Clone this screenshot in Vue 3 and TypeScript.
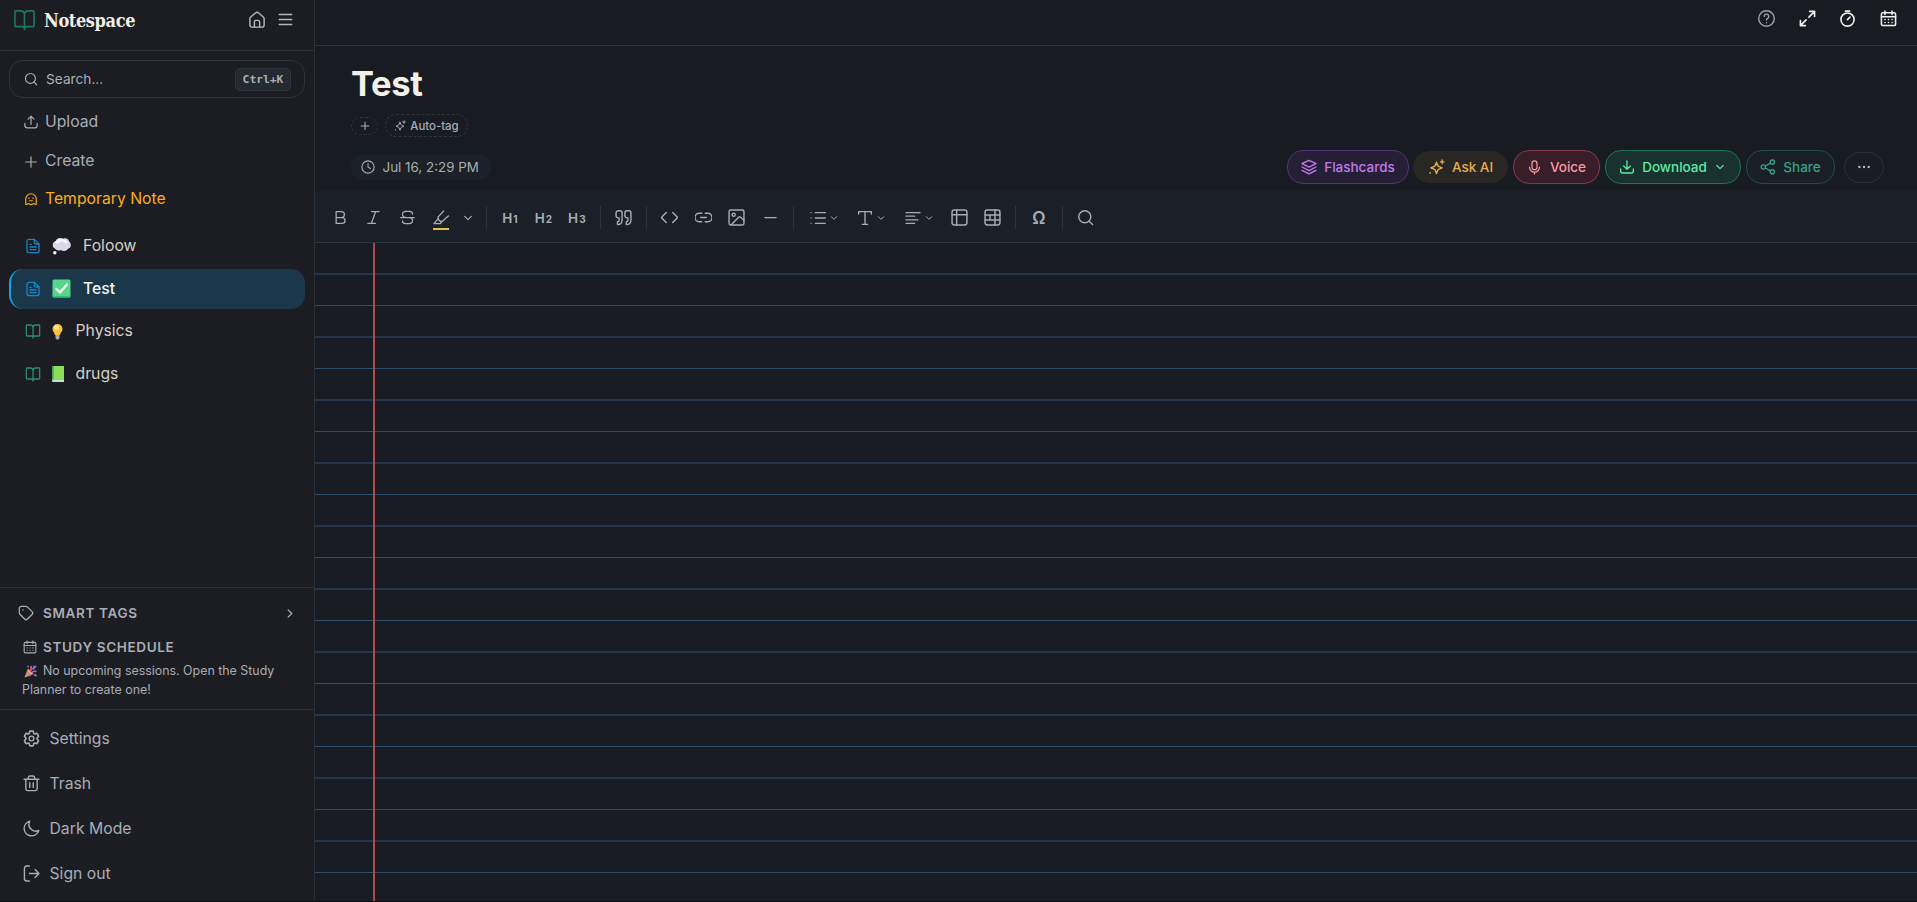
<script setup lang="ts">
import { h } from 'vue'
import type { FunctionalComponent } from 'vue'

const paths: Record<string, string> = {
  book: '<path d="M12 6.500V22.500M3 19.500a1 1 0 0 1-1-1V4a1 1 0 0 1 1-1h5a4 4 0 0 1 4 3.500a4 4 0 0 1 4-3.500h5a1 1 0 0 1 1 1v14.500a1 1 0 0 1-1 1h-6.500a2.500 2.500 0 0 0-2.500 2.500a2.500 2.500 0 0 0-2.500-2.500z"/>',
  home: '<path d="M2.500 10.300a3 3 0 0 1 1.100-2.300l6.300-5.300a3.200 3.200 0 0 1 4.200 0l6.300 5.300a3 3 0 0 1 1.100 2.300v8.200a3 3 0 0 1-3 3h-13a3 3 0 0 1-3-3z"/><path d="M8.500 21.500v-7a2 2 0 0 1 2-2h3a2 2 0 0 1 2 2v7"/>',
  menu: '<path d="M2 4h20M2 12h20M2 20h20"/>',
  search: '<circle cx="11" cy="11" r="8.500"/><path d="m17.200 17.200 4.800 4.800"/>',
  upload: '<path d="M12 16V2.500M7 7l5-5 5 5M1.500 14.500V18a4 4 0 0 0 4 4h13a4 4 0 0 0 4-4v-3.500"/>',
  download: '<path d="M12 3v12M7 10.500l5 5 5-5M2.500 15v3a3 3 0 0 0 3 3h13a3 3 0 0 0 3-3v-3"/>',
  plus: '<path d="M12 3v18M3 12h18"/>',
  ghost: '<path d="M3 21V12a9 9 0 0 1 18 0v9M3 21c2 1 3-1 4.500-1s2 1.500 4.500 1.500 3-1.500 4.500-1.500 3 2 4.500 1"/><path d="M8.500 10v1M15.500 10v1M9.500 15h5"/>',
  doc: '<path d="M14 2H6a3 3 0 0 0-3 3v14a3 3 0 0 0 3 3h12a3 3 0 0 0 3-3V9z"/><path d="M14 2v4a3 3 0 0 0 3 3h4M7.500 9.500h2M7.500 13.500h9M7.500 17.500h9"/>',
  tag: '<path d="M2 5a3 3 0 0 1 3-3h6.500a4 4 0 0 1 2.800 1.200l6.800 6.800a3 3 0 0 1 0 4.200l-6.900 6.900a3 3 0 0 1-4.200 0L3.200 14.300A4 4 0 0 1 2 11.500z"/><path d="M7.500 7.300v.4"/>',
  calendar: '<rect x="2" y="4" width="20" height="18" rx="2"/><path d="M7 1.500v5M17 1.500v5M2 9.500h20"/><path d="M7 13.500h.1M12 13.500h.1M17 13.500h.1M7 17.700h.1M12 17.700h.1M17 17.700h.1"/>',
  right: '<path d="m9 4 8 8-8 8"/>',
  down: '<path d="m4 8 8 8 8-8"/>',
  gear: '<path d="M9.594 3.940c.09-.542.56-.94 1.110-.94h2.593c.55 0 1.020.398 1.110.94l.213 1.281c.063.374.313.686.645.87.074.04.147.083.22.127.325.196.72.257 1.075.124l1.217-.456a1.125 1.125 0 0 1 1.370.49l1.296 2.247a1.125 1.125 0 0 1-.26 1.431l-1.003.827c-.293.241-.438.613-.43.992a7.723 7.723 0 0 1 0 .255c-.008.378.137.75.43.991l1.004.827c.424.35.534.955.26 1.430l-1.298 2.247a1.125 1.125 0 0 1-1.369.491l-1.217-.456c-.355-.133-.75-.072-1.076.124a6.470 6.470 0 0 1-.22.128c-.331.183-.581.495-.644.869l-.213 1.281c-.09.543-.56.94-1.110.94h-2.594c-.55 0-1.019-.398-1.110-.94l-.213-1.281c-.062-.374-.312-.686-.644-.87a6.520 6.520 0 0 1-.22-.127c-.325-.196-.72-.257-1.076-.124l-1.217.456a1.125 1.125 0 0 1-1.369-.49l-1.297-2.247a1.125 1.125 0 0 1 .26-1.431l1.004-.827c.292-.24.437-.613.43-.991a6.932 6.932 0 0 1 0-.255c.007-.38-.138-.751-.43-.992l-1.004-.827a1.125 1.125 0 0 1-.26-1.430l1.297-2.247a1.125 1.125 0 0 1 1.370-.491l1.216.456c.356.133.751.072 1.076-.124.072-.044.146-.086.22-.128.332-.183.582-.495.644-.869z" transform="matrix(1.150 0 0 1.150 -1.800 -1.800)"/><circle cx="12" cy="12" r="3.300"/>',
  trash: '<path d="M1.500 6h21M4 6v13.500a2.500 2.500 0 0 0 2.500 2.500h11a2.500 2.500 0 0 0 2.500-2.500V6M7.500 6V4a2.500 2.500 0 0 1 2.500-2.500h4A2.500 2.500 0 0 1 16.500 4v2M9.500 11v6.500M14.500 11v6.500"/>',
  moon: '<path d="M22.300 14.500A10.500 10.500 0 1 1 9.500 1.700a9.500 9.500 0 0 0 12.800 12.800z"/>',
  exit: '<path d="M9 1.500H5a3 3 0 0 0-3 3v15a3 3 0 0 0 3 3h4M9 12h13.500M17 6.500l5.500 5.500-5.500 5.500"/>',
  help: '<circle cx="12" cy="12" r="11"/><path d="M8.800 9a3.200 3.200 0 1 1 5 2.700c-1.200.8-1.800 1.300-1.800 2.300M12 17.800v.2"/>',
  expand: '<path d="M15 2h7v7M22 2l-8 8M9 22H2v-7M2 22l8-8"/>',
  timer: '<circle cx="12" cy="13.500" r="9.300"/><path d="M9 1.500h6M12 13.500l3.500-3.500"/>',
  sparkle: '<path d="M10.500 5.500 12.300 10a3 3 0 0 0 1.700 1.700l4.500 1.800-4.500 1.800a3 3 0 0 0-1.700 1.700l-1.800 4.500L8.700 17A3 3 0 0 0 7 15.300l-4.500-1.800L7 11.700A3 3 0 0 0 8.700 10z" transform="translate(1.500 -1)"/><path d="M20 1.500v5M17.500 4h5M3 19.500v.5"/>',
  clock: '<circle cx="12" cy="12" r="10.500"/><path d="M12 6v6l4 2.500"/>',
  layers: '<path d="M12 2 22.500 7 12 12.300 1.500 7zM1.500 12 12 17.300 22.500 12M1.500 17 12 22.300 22.500 17"/>',
  mic: '<rect x="8" y="1.500" width="8" height="14" rx="4"/><path d="M4 11.500a8 8 0 0 0 16 0M12 19.500v3"/>',
  share: '<circle cx="18.500" cy="4.700" r="3.200"/><circle cx="5" cy="12" r="3.200"/><circle cx="18.500" cy="19.300" r="3.200"/><path d="m8 10.500 7.500-4.200M8 13.500l7.500 4.200"/>',
  dots: '<path d="M4 12h.1M12 12h.1M20 12h.1" stroke-width="4"/>',
  bold: '<path d="M5 12V2.500h8.500a4.700 4.700 0 0 1 0 9.500H5v9.500h9.500a4.700 4.700 0 0 0 0-9.500"/>',
  italic: '<path d="M9 2.500h12M3 21.500h12M15.500 2.500l-7 19"/>',
  strike: '<path d="M20 6.500c0-2.500-2-4.300-5-4.300H9.500C6 2.200 4 4 4 6.800c0 3 2 5.200 6 5.200h4.500c3.500 0 5.500 2 5.500 4.800s-2 5-5.500 5H9c-3 0-5-1.800-5-4.300M1 12h22"/>',
  marker: '<path d="M16 1.500 8.500 9.500a3.500 3.500 0 0 0 0 5l1.500 1.500a3.500 3.500 0 0 0 5 0l8-7M8 13l-6.500 7.500H11l2.500-3.500"/>',
  quote: '<path d="M10 5.500A3 3 0 0 0 7 2.500H4.500a3 3 0 0 0-3 3v4a3 3 0 0 0 3 3h1.300v3.500c0 1.300-.8 2-2 2h-.3v4c4 0 6.500-2.300 6.500-6.500zM22.500 5.500a3 3 0 0 0-3-3H17a3 3 0 0 0-3 3v4a3 3 0 0 0 3 3h1.300v3.500c0 1.300-.8 2-2 2H16v4c4 0 6.500-2.300 6.500-6.500z"/>',
  code: '<path d="m7.500 5-7 7 7 7M16.500 5l7 7-7 7"/>',
  link: '<path d="M9.500 6H6a6 6 0 0 0 0 12h3.500M14.500 6H18a6 6 0 0 1 0 12h-3.500M8 12h8"/>',
  image: '<rect x="1.500" y="1.500" width="21" height="21" rx="2"/><circle cx="8" cy="8" r="2.200"/><path d="m5 22 10-10.500a2 2 0 0 1 2.800 0l4.700 4.500"/>',
  minus: '<path d="M3 12h18"/>',
  list: '<path d="M8 4h15M8 12h15M8 20h15M1.500 4h.1M1.500 12h.1M1.500 20h.1"/>',
  type: '<path d="M2.500 6V2.500h19V6M12 2.500v19M8 21.500h8"/>',
  align: '<path d="M1.500 4h21M1.500 9.300h13M1.500 14.700h18M1.500 20h13"/>',
  panel: '<rect x="1.500" y="1.500" width="21" height="21" rx="3"/><path d="M1.500 8h21M8 1.500v21"/>',
  table: '<rect x="1.500" y="1.500" width="21" height="21" rx="3"/><path d="M1.500 8.500h21M1.500 15.500h21M8.500 8.500v7M15.500 1.500v21"/>',
}

const emojis: Record<string, string> = {
  thought: '<g fill="#dcd7e8"><circle cx="5" cy="8" r="4.300"/><circle cx="8" cy="5.300" r="4.300"/><circle cx="13" cy="5.500" r="4.300"/><circle cx="15" cy="8" r="3.800"/><circle cx="12" cy="9.500" r="4.500"/><circle cx="7" cy="9.500" r="4"/><circle cx="2.800" cy="15.800" r="1.700" fill="#f4f1fa"/></g><path d="M5 5q5-4 9 0" stroke="#f5f3fb" stroke-width="3" fill="none" stroke-linecap="round"/>',
  check: '<rect x=".5" y=".5" width="18" height="18" rx="1.500" fill="#56d68b"/><path d="M.5 15.500v1.500q0 1.500 1.500 1.500h15q1.500 0 1.500-1.500v-1.500q-1 1.500-3 1.500h-12q-2 0-3-1.500" fill="#39b975"/><path d="m4.500 10 3.500 3.500 7-8" stroke="#f2fff7" stroke-width="2.300" fill="none" stroke-linecap="round" stroke-linejoin="round"/>',
  bulb: '<path d="M5.500 1a5 5 0 0 1 5 5c0 2.700-2.200 3.500-2.500 6H3C2.700 9.500.5 8.700.5 6a5 5 0 0 1 5-5" fill="#ffc23d"/><circle cx="4.500" cy="4.500" r="2.500" fill="#ffe58a"/><path d="M3.500 12h4v3l-1 1.500h-2l-1-1.500z" fill="#aaa6b4"/>',
  green: '<path d="M1.500 1h11v16h-11q-1.500 0-1.500-1.500V2.500Q0 1 1.500 1" fill="#75cd4c"/><path d="M2 1h10.500v14H2z" fill="#8bdc58"/><path d="M.5 15h12v2h-12z" fill="#c9d8e8"/><path d="M0 2.500v12.500q.5-1 1.500-1V1Q0 1 0 2.500" fill="#46a551"/>',
  party: '<path d="m.5 12.500 3.500-9L9.500 9z" fill="#ecad3b"/><path d="M2 9c2 1 3 2 3.500 2M3 6.500l4 4" stroke="#b67bd0" stroke-width="1.300"/><path d="M6 6q2-2 1-5M8 7.500q2-2 4.500-1" stroke="#ef4e88" stroke-width="1.800" fill="none"/><path d="m8.500 4.500 3.500-3.500M10 9.500l2.500 1.500M3.500 1l1 1" stroke="#4da5ef" stroke-width="1.700"/><circle cx="10" cy="1.500" r="1" fill="#b24cdb"/>',
}

interface IconProps { name: string; size: number; w?: number }
const Icon: FunctionalComponent<IconProps> = (p) =>
  h('svg', {
    width: p.size, height: p.size, viewBox: '0 0 24 24', fill: 'none', stroke: 'currentColor',
    'stroke-width': p.w ?? 2, 'stroke-linecap': 'round', 'stroke-linejoin': 'round', innerHTML: paths[p.name],
  })
Icon.props = ['name', 'size', 'w']

const Emoji: FunctionalComponent<{ name: string; w: number; h: number }> = (p) =>
  h('svg', { width: p.w, height: p.h, viewBox: `0 0 ${p.w} ${p.h}`, innerHTML: emojis[p.name] })
Emoji.props = ['name', 'w', 'h']

const files = [
  { kind: 'doc', emoji: 'thought', ew: 19, eh: 19, label: 'Foloow' },
  { kind: 'doc', emoji: 'check', ew: 19, eh: 19, label: 'Test', active: true },
  { kind: 'book', emoji: 'bulb', ew: 12, eh: 17, label: 'Physics' },
  { kind: 'book', emoji: 'green', ew: 12, eh: 17, label: 'drugs' },
]
const footer = [
  { icon: 'gear', label: 'Settings' },
  { icon: 'trash', label: 'Trash' },
  { icon: 'moon', label: 'Dark Mode' },
  { icon: 'exit', label: 'Sign out' },
]
type Tool = { t: 'icon' | 'drop' | 'sep' | 'head' | 'mark' | 'chev' | 'omega'; v?: string; s?: number }
const tools: Tool[] = [
  { t: 'icon', v: 'bold', s: 15 }, { t: 'icon', v: 'italic', s: 15 }, { t: 'icon', v: 'strike', s: 15 },
  { t: 'mark' }, { t: 'chev' }, { t: 'sep' },
  { t: 'head', v: '1' }, { t: 'head', v: '2' }, { t: 'head', v: '3' }, { t: 'sep' },
  { t: 'icon', v: 'quote', s: 17 }, { t: 'sep' },
  { t: 'icon', v: 'code', s: 17 }, { t: 'icon', v: 'link', s: 17 }, { t: 'icon', v: 'image', s: 17 },
  { t: 'icon', v: 'minus', s: 15 }, { t: 'sep' },
  { t: 'drop', v: 'list' }, { t: 'drop', v: 'type' }, { t: 'drop', v: 'align' },
  { t: 'icon', v: 'panel', s: 17 }, { t: 'icon', v: 'table', s: 17 }, { t: 'sep' },
  { t: 'omega' }, { t: 'sep' }, { t: 'icon', v: 'search', s: 17 },
]
</script>

<template>
  <div class="app">
    <aside class="sidebar">
      <header class="brand">
        <Icon class="logo" name="book" :size="23" :w="1.7" />
        <span class="name">Notespace</span>
        <Icon name="home" :size="18" :w="1.9" />
        <Icon class="burger" name="menu" :size="15" :w="2.2" />
      </header>
      <div class="search">
        <Icon name="search" :size="14" :w="2" />
        <span>Search...</span>
        <kbd>Ctrl+K</kbd>
      </div>
      <nav class="actions">
        <a><Icon name="upload" :size="14" :w="2.1" />Upload</a>
        <a><Icon class="create" name="plus" :size="14" :w="2" />Create</a>
        <a class="temp"><Icon name="ghost" :size="14" :w="2" />Temporary Note</a>
      </nav>
      <nav class="files">
        <a v-for="f in files" :key="f.label" :class="[f.kind, { active: f.active }]">
          <Icon class="kind" :name="f.kind" :size="16" :w="1.9" />
          <Emoji :name="f.emoji" :w="f.ew" :h="f.eh" />
          <span>{{ f.label }}</span>
        </a>
      </nav>
      <section class="study">
        <h3 class="tags"><Icon name="tag" :size="16" :w="1.9" />SMART TAGS<Icon class="go" name="right" :size="11" :w="2.8" /></h3>
        <h3 class="schedule"><Icon name="calendar" :size="14" :w="1.9" />STUDY SCHEDULE</h3>
        <p><Emoji name="party" :w="13" :h="13" />No upcoming sessions. Open the Study Planner to create one!</p>
      </section>
      <nav class="footer">
        <a v-for="f in footer" :key="f.label"><Icon :name="f.icon" :size="17" :w="2" />{{ f.label }}</a>
      </nav>
    </aside>

    <main class="main">
      <header class="topbar">
        <Icon class="dim" name="help" :size="17" :w="2" />
        <Icon name="expand" :size="17" :w="2.3" />
        <Icon name="timer" :size="17" :w="2.3" />
        <Icon name="calendar" :size="17" :w="2.2" />
      </header>
      <section class="note">
        <h1>Test</h1>
        <div class="labels">
          <span class="add"><Icon name="plus" :size="10" :w="2.4" /></span>
          <span class="auto"><Icon name="sparkle" :size="12" :w="2" />Auto-tag</span>
        </div>
        <div class="meta">
          <span class="date"><Icon name="clock" :size="14" :w="1.9" />Jul 16, 2:29 PM</span>
          <div class="buttons">
            <button class="flash"><Icon name="layers" :size="16" />Flashcards</button>
            <button class="ask"><Icon name="sparkle" :size="17" />Ask AI</button>
            <button class="voice"><Icon name="mic" :size="15" />Voice</button>
            <button class="down"><Icon name="download" :size="16" />Download<Icon class="caret" name="down" :size="10" :w="2.800" /></button>
            <button class="share"><Icon name="share" :size="16" />Share</button>
            <button class="more"><Icon name="dots" :size="14" /></button>
          </div>
        </div>
      </section>
      <div class="toolbar">
        <template v-for="(t, i) in tools" :key="i">
          <i v-if="t.t === 'sep'" class="sep" />
          <span v-else-if="t.t === 'drop'" class="drop"><Icon :name="t.v!" :size="16" :w="2" /><Icon name="down" :size="8" :w="3" /></span>
          <span v-else-if="t.t === 'chev'" class="chev"><Icon name="down" :size="10" :w="2.6" /></span>
          <span v-else-if="t.t === 'mark'" class="tool mark"><Icon name="marker" :size="16" :w="2" /><b /></span>
          <span v-else-if="t.t === 'head'" class="tool head">H<small>{{ t.v }}</small></span>
          <span v-else-if="t.t === 'omega'" class="tool omega">Ω</span>
          <span v-else class="tool"><Icon :name="t.v!" :size="t.s!" :w="2" /></span>
        </template>
      </div>
      <div class="paper"><div class="margin" /></div>
    </main>
  </div>
</template>

<style>
body { background: #181b22; }
</style>

<style scoped>
* { box-sizing: border-box; }
svg { flex: none; display: block; }
.app { display: flex; width: 100%; height: 902px; overflow: hidden; background: #181b22; border-bottom: 1px solid #0d0e12; color: #a9adb6; font: 15.750px/20px Inter, sans-serif; }
.sidebar { width: 315px; flex: none; display: flex; flex-direction: column; background: #1b1d23; border-right: 1px solid #2b2f36; }
.brand { display: flex; align-items: center; height: 51px; padding: 0 21.500px 11px 13px; border-bottom: 1px solid #2d3037; color: #b6b8c0; }
.logo { color: #217565; }
.name { margin: 2px auto 0 8px; font: bold 18px/22px "DejaVu Serif Condensed", "DejaVu Serif", serif; font-stretch: condensed; letter-spacing: -.38px; color: #f1eee9; }
.burger { margin-left: 12px; }
.search { display: flex; align-items: center; gap: 8px; height: 38px; margin: 9px 9px 0; padding: 0 13px 0 14px; border: 1px solid #2f333a; border-radius: 14px; font-size: 13.700px; }
kbd { margin-left: auto; width: 56px; height: 23px; border: 1px solid #30343c; border-radius: 5px; background: #252930; text-align: center; font: bold 11.300px/21px "DejaVu Sans Mono", monospace; }
.actions { padding: 5px 24px 0; }
.actions a { display: flex; align-items: center; gap: 7px; height: 38.400px; }
.create { position: relative; top: 1px; }
.actions .temp { color: #fbae17; }
.files { display: flex; flex-direction: column; gap: 2.500px; padding: 8px 9px 0; }
.files a { display: flex; align-items: center; height: 40px; padding-left: 14px; border-left: 2px solid transparent; border-radius: 14px; color: #d4cfc6; }
.files .kind { width: 16px; margin-right: 11px; color: #1685ca; }
.files .book .kind { color: #2e8b70; }
.files span { margin-left: 12px; }
.files .book span { margin-left: 11.500px; }
.files .active { background: #1a384a; border-color: #1ca0ea; }
.files .active span { color: #f4f2ee; font-weight: 500; }
.study { margin-top: auto; height: 122px; border-top: 1px solid #2d3037; padding: 16px 24px 0 22px; }
h3 { display: flex; align-items: center; margin: 0; height: 18px; font-size: 13.500px; font-weight: 600; letter-spacing: .65px; }
.tags { gap: 9px; margin-left: -4px; }
.go { margin-left: auto; margin-right: -5px; }
.schedule { gap: 6px; margin: 16px 0 0 1px; }
p { margin: 5px 0 0; font-size: 12.400px; line-height: 19px; }
p svg { display: inline-block; vertical-align: -3px; margin: 0 6px 0 2px; }
.footer { height: 192px; border-top: 1px solid #2d3037; padding: 6px 23px; }
.footer a { display: flex; align-items: center; gap: 9.500px; height: 45px; }

.main { flex: 1; min-width: 0; display: flex; flex-direction: column; }
.topbar { display: flex; justify-content: flex-end; align-items: center; gap: 23.600px; height: 46px; padding: 0 20px 9px 0; border-bottom: 1px solid #2d3037; color: #f0eeea; }
.dim { color: #9da1ab; }
.note { height: 145px; padding: 0 33px 0 36px; }
h1 { margin: 17px 0 0; height: 42px; font-size: 34.500px; line-height: 41px; font-weight: 700; letter-spacing: -.3px; color: #f3efe9; }
.labels { display: flex; align-items: center; gap: 7px; height: 23px; margin-top: 9px; }
.add, .auto { display: flex; align-items: center; justify-content: center; border: 1px dashed #30343c; }
.add { width: 27px; height: 18px; border-radius: 9px; }
.auto { gap: 4px; width: 83px; height: 23px; border-radius: 12px; font-size: 11.400px; font-weight: 550; }
.meta { display: flex; align-items: center; justify-content: space-between; height: 34px; margin-top: 13px; }
.date { display: flex; align-items: center; gap: 7.500px; width: 140px; height: 26px; padding-left: 10px; border-radius: 12px; background: #1c2027; font-size: 13.400px; white-space: nowrap; }
.buttons { display: flex; align-items: center; }
button { display: flex; align-items: center; justify-content: center; height: 34px; gap: 7px; margin: 0; padding: 0; border: 1px solid; border-radius: 16px; font: 550 13.500px/18px Inter, sans-serif; }
.flash { width: 122px; margin-right: 4px; color: #c27aee; background: #251f36; border-color: #55307a; }
.ask { width: 95px; height: 32px; margin-right: 5px; color: #e7ae4d; background: #292724; border-color: #292724; }
.voice { width: 87px; margin-right: 5px; gap: 8px; color: #f59a9d; background: #381e29; border-color: #84394b; }
.down { width: 136px; margin-right: 5px; color: #5feaa2; background: #19322f; border-color: #1c7355; }
.caret { margin-left: 1px; margin-right: 2px; }
.share { width: 89px; margin-right: 9px; gap: 7px; color: #35a386; background: #191f25; border-color: #1e4c48; }
.more { width: 40px; height: 31px; color: #b9bbc1; background: #191c22; border-color: #2c3036; }
.toolbar { display: flex; align-items: center; gap: 3.500px; height: 52px; padding: 2px 10px 0; background: #1b1f27; border-bottom: 1px solid #30343b; }
.tool { display: flex; align-items: center; justify-content: center; width: 30px; height: 30px; flex: none; }
.mark { position: relative; }
.mark b { position: absolute; left: 7px; top: 25px; width: 16px; height: 2px; background: #e3bd4a; }
.chev { width: 19.500px; padding-right: 2px; display: flex; justify-content: center; }
.sep { width: 1px; height: 23px; margin: 0 4.200px; background: #30343c; flex: none; }
.head { align-items: baseline; font-size: 13.500px; line-height: 30px; font-weight: 600; }
.head small { font-size: 10px; margin-left: 1px; font-weight: 700; }
.omega { font-size: 17px; font-weight: 600; }
.drop { display: flex; align-items: center; justify-content: center; gap: 4px; width: 44px; flex: none; }
.paper { position: relative; flex: 1; background: repeating-linear-gradient(to bottom, transparent 0 30px, #23354a 30px 32px, transparent 32px 62px, #2b4d69 62px 63px); }
.margin { position: absolute; left: 58px; top: 0; bottom: 0; width: 2px; background: #b2484c; }
</style>
